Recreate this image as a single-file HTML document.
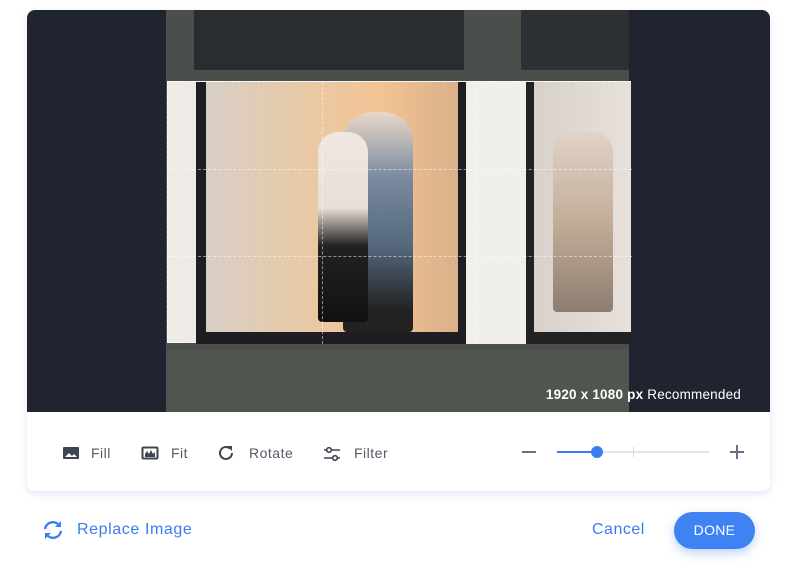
<!DOCTYPE html>
<html><head><style>
body{margin:0;width:800px;height:571px;background:#fff;font-family:"Liberation Sans",sans-serif;position:relative;overflow:hidden}
.card{position:absolute;left:27px;top:10px;width:743px;height:481px;border-radius:8px;background:#fff;box-shadow:0 3px 8px rgba(90,120,200,.18);overflow:hidden}
.img{position:absolute;left:0;top:0;width:743px;height:402px;background:#1f2430}
.photo{position:absolute;left:139px;top:0;width:463px;height:402px;background:#4a4f4c}
.abs{position:absolute}
.tb{position:absolute;top:435px;font-size:14px;color:#555a66;letter-spacing:.5px}
</style></head><body>
<div class="card">
<div class="img">
<div class="photo">
 <div class="abs" style="left:28px;top:0;width:270px;height:60px;background:#2a2d30"></div>
 <div class="abs" style="left:355px;top:0;width:108px;height:60px;background:#2e3134"></div>
 <div class="abs" style="left:0;top:340px;width:463px;height:62px;background:#505550"></div>
 <div class="abs" style="left:1px;top:71px;width:464px;height:262px;background:#eeeae5;border:1px dashed #fff;box-sizing:border-box">
  <div class="abs" style="left:28px;top:0;width:270px;height:262px;background:#1e1e22"></div>
  <div class="abs" style="left:38px;top:0;width:252px;height:250px;background:linear-gradient(90deg,#d8cfc6,#e9c9a6 40%,#f2c393 70%,#d9b08a)"></div>
  <div class="abs" style="left:175px;top:30px;width:70px;height:220px;background:linear-gradient(#e9d8c9,#7a8aa0 30%,#56697f 60%,#222 90%);border-radius:30px 30px 4px 4px"></div>
  <div class="abs" style="left:150px;top:50px;width:50px;height:190px;background:linear-gradient(#f0e8e0,#e8e0d8 40%,#222 60%,#111);border-radius:20px 20px 4px 4px"></div>
  <div class="abs" style="left:358px;top:0;width:105px;height:262px;background:#222"></div>
  <div class="abs" style="left:366px;top:0;width:97px;height:250px;background:linear-gradient(90deg,#d8d0cb,#e8e0da)"></div>
  <div class="abs" style="left:385px;top:50px;width:60px;height:180px;background:linear-gradient(#e0d3c8,#c3ad98 50%,#8d7d70);border-radius:20px 20px 4px 4px"></div>
  <div class="abs" style="left:298px;top:0;width:60px;height:262px;background:#f1efec"></div>
  <div class="abs" style="left:154px;top:0;width:0;height:262px;border-left:1px dashed rgba(255,255,255,.5)"></div>
  <div class="abs" style="left:308px;top:0;width:0;height:262px;border-left:1px dashed rgba(255,255,255,.5)"></div>
  <div class="abs" style="left:0;top:87px;width:464px;border-top:1px dashed rgba(255,255,255,.5)"></div>
  <div class="abs" style="left:0;top:174px;width:464px;border-top:1px dashed rgba(255,255,255,.5)"></div>
 </div>
</div>
<div class="abs" style="right:29px;top:377px;color:#fff;font-size:13.5px;letter-spacing:.2px"><b>1920 x 1080 px</b> Recommended</div>
</div>
<svg class="abs" style="left:35px;top:436px" width="18" height="14" viewBox="0 0 18 14"><rect x="1" y="1" width="16" height="12" rx="1" fill="#3e4453"/><path d="M3 11l4-4 3 3 2-2 3 3z" fill="#fff"/></svg>
<div class="tb" style="left:64px">Fill</div>
<svg class="abs" style="left:114px;top:436px" width="18" height="14" viewBox="0 0 18 14"><rect x="1.5" y="1.5" width="15" height="11" rx="1" fill="none" stroke="#3e4453" stroke-width="2"/><path d="M4 11V8l2-3 2 3 2-4 2 4 2-2v5z" fill="#3e4453"/></svg>
<div class="tb" style="left:144px">Fit</div>
<svg class="abs" style="left:190px;top:434px" width="18" height="18" viewBox="0 0 18 18"><path d="M15 9a6 6 0 1 1-2-4.5" fill="none" stroke="#3e4453" stroke-width="2"/><path d="M10 2h5v5z" fill="#3e4453"/></svg>
<div class="tb" style="left:222px">Rotate</div>
<svg class="abs" style="left:296px;top:435px" width="18" height="18" viewBox="0 0 18 18"><path d="M1 5h16M1 13h16" stroke="#3e4453" stroke-width="1.6"/><circle cx="6" cy="5" r="2.3" fill="#fff" stroke="#3e4453" stroke-width="1.6"/><circle cx="12" cy="13" r="2.3" fill="#fff" stroke="#3e4453" stroke-width="1.6"/></svg>
<div class="tb" style="left:327px">Filter</div>
<div class="abs" style="left:495px;top:441px;width:14px;height:2px;background:#6a7080"></div>
<div class="abs" style="left:530px;top:441px;width:152px;height:2px;background:#e3e6ec"></div>
<div class="abs" style="left:530px;top:441px;width:40px;height:2px;background:#3b7cf0"></div>
<div class="abs" style="left:606px;top:437px;width:1px;height:10px;background:#d5d8de"></div>
<div class="abs" style="left:564px;top:436px;width:12px;height:12px;border-radius:50%;background:#3b7cf0"></div>
<div class="abs" style="left:703px;top:441px;width:14px;height:2px;background:#6a7080"></div>
<div class="abs" style="left:709px;top:435px;width:2px;height:14px;background:#6a7080"></div>
</div>
<svg class="abs" style="left:42px;top:519px" width="22" height="22" viewBox="0 0 22 22"><path d="M3 10a8 8 0 0 1 14-4" fill="none" stroke="#3b7cf0" stroke-width="2.4"/><path d="M19 2v6h-6z" fill="#3b7cf0"/><path d="M19 12a8 8 0 0 1-14 4" fill="none" stroke="#3b7cf0" stroke-width="2.4"/><path d="M3 20v-6h6z" fill="#3b7cf0"/></svg>
<div class="abs" style="left:77px;top:521px;font-size:16px;color:#3b7cf0;letter-spacing:.6px">Replace Image</div>
<div class="abs" style="left:592px;top:521px;font-size:16px;color:#3b7cf0;letter-spacing:.5px">Cancel</div>
<div class="abs" style="left:674px;top:512px;width:81px;height:37px;border-radius:19px;background:#3f82f4;box-shadow:0 4px 10px rgba(60,130,240,.35);color:#fff;font-size:14px;text-align:center;line-height:37px;letter-spacing:.3px">DONE</div>
</body></html>
